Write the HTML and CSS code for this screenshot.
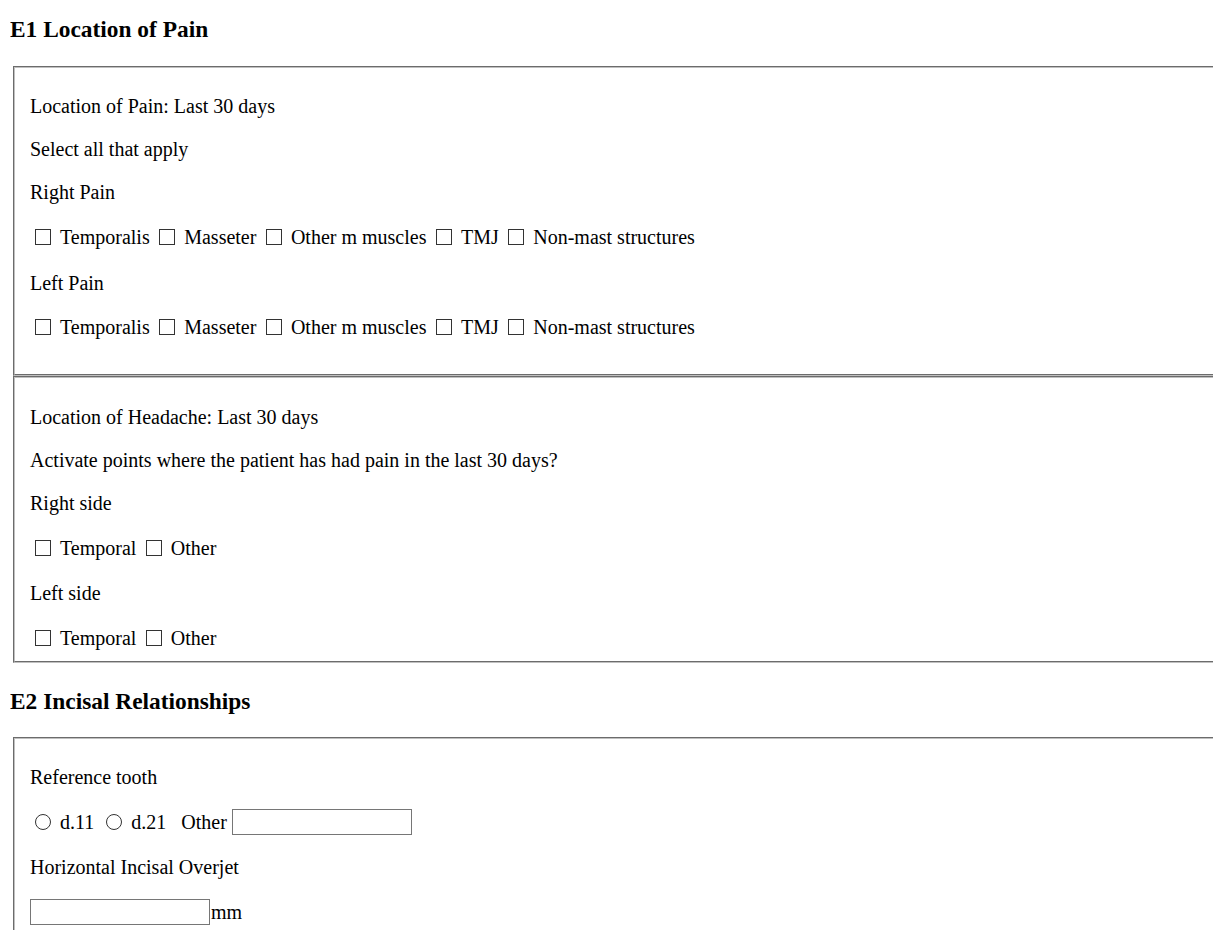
FILE: index.html
```html
<!DOCTYPE html>
<html lang="en">
<head>
<meta charset="utf-8">
<title>Examination</title>
<link rel="stylesheet" href="styles.css">
</head>
<body>
<h3 class="title title-first">E1 Location of Pain</h3>
<fieldset class="group group-tall">
  <p class="line">Location of Pain: Last 30 days</p>
  <p class="line">Select all that apply</p>
  <p class="line">Right Pain</p>
  <div class="choices">
    <label class="choice"><input type="checkbox" class="box"><span>Temporalis</span></label>
    <label class="choice"><input type="checkbox" class="box"><span>Masseter</span></label>
    <label class="choice"><input type="checkbox" class="box"><span>Other m muscles</span></label>
    <label class="choice"><input type="checkbox" class="box"><span>TMJ</span></label>
    <label class="choice"><input type="checkbox" class="box"><span>Non-mast structures</span></label>
  </div>
  <p class="line line-left">Left Pain</p>
  <div class="choices">
    <label class="choice"><input type="checkbox" class="box"><span>Temporalis</span></label>
    <label class="choice"><input type="checkbox" class="box"><span>Masseter</span></label>
    <label class="choice"><input type="checkbox" class="box"><span>Other m muscles</span></label>
    <label class="choice"><input type="checkbox" class="box"><span>TMJ</span></label>
    <label class="choice"><input type="checkbox" class="box"><span>Non-mast structures</span></label>
  </div>
</fieldset>
<fieldset class="group group-second">
  <p class="line">Location of Headache: Last 30 days</p>
  <p class="line">Activate points where the patient has had pain in the last 30 days?</p>
  <p class="line">Right side</p>
  <div class="choices">
    <label class="choice"><input type="checkbox" class="box"><span>Temporal</span></label>
    <label class="choice"><input type="checkbox" class="box"><span>Other</span></label>
  </div>
  <p class="line">Left side</p>
  <div class="choices">
    <label class="choice"><input type="checkbox" class="box"><span>Temporal</span></label>
    <label class="choice"><input type="checkbox" class="box"><span>Other</span></label>
  </div>
</fieldset>
<h3 class="title title-next">E2 Incisal Relationships</h3>
<fieldset class="group">
  <p class="line">Reference tooth</p>
  <div class="choices choices-radio">
    <label class="choice"><input type="radio" name="ref" class="round"><span>d.11</span></label>
    <label class="choice"><input type="radio" name="ref" class="round"><span>d.21</span></label>
    <label class="choice choice-other"><span>Other</span><input type="text" class="field field-other"></label>
  </div>
  <p class="line">Horizontal Incisal Overjet</p>
  <div class="choices">
    <label class="unit"><input type="text" class="field"><span>mm</span></label>
  </div>
</fieldset>
</body>
</html>
```

FILE: styles.css
```css
html {
  overflow: hidden;
}

body {
  margin: 0 0 0 10px;
  font-family: "Liberation Serif", "Times New Roman", serif;
  font-size: 20px;
  color: #000;
  background: #fff;
}

.title {
  margin: 0;
  height: 24px;
  line-height: 24px;
  font-size: 23.4px;
  font-weight: bold;
}

.title-first {
  padding-top: 17px;
  margin-bottom: 25px;
}

.title-next {
  margin-top: 26px;
  margin-bottom: 24px;
}

.group {
  display: flex;
  flex-direction: column;
  gap: 21px;
  width: 1260px;
  box-sizing: border-box;
  margin: 0 0 0 3px;
  padding: 27px 15px 10px 15px;
  border: 2px groove rgb(192, 192, 192);
  min-width: 0;
}

.group-tall {
  padding-bottom: 34px;
}

.group-second {
  padding-top: 28px;
}

.line {
  margin: 0;
  height: 22px;
  line-height: 22px;
}

.line-left {
  margin-top: 1px;
  margin-bottom: -1px;
}

.choices {
  display: flex;
  align-items: center;
  gap: 9.5px;
  height: 26px;
}

.choices-radio {
  gap: 12px;
}

.choice {
  display: inline-flex;
  align-items: center;
  gap: 9px;
  line-height: 22px;
}

.choices > .choice:first-child {
  margin-left: 5px;
}

.box,
.round {
  appearance: none;
  -webkit-appearance: none;
  width: 16px;
  height: 16px;
  margin: 0;
  border: 1px solid #333;
  background: #fff;
  box-sizing: border-box;
}

.round {
  border-radius: 50%;
}

.choice-other {
  gap: 5px;
  margin-left: 3px;
}

.field {
  width: 180px;
  height: 26px;
  margin: 0;
  padding: 0 2px;
  box-sizing: border-box;
  border: 1px solid #767676;
  font: inherit;
  background: #fff;
}

.unit {
  display: inline-flex;
  align-items: center;
  gap: 1px;
  line-height: 22px;
}
```
